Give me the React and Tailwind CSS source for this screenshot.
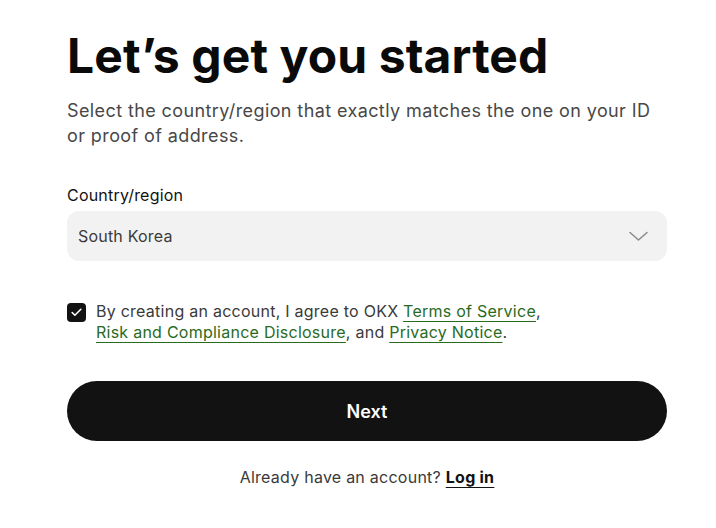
import React, { useState } from 'react';
import { Check } from 'lucide-react';

export default function App() {
  const [agreed, setAgreed] = useState(true);

  return (
    <div className="min-h-screen bg-white font-['Inter',sans-serif] text-[#0a0a0a]">
      <div className="w-[600px] ml-[67px] pt-[28px]">
        <h1 className="text-[48px] leading-[56px] font-bold tracking-[0.1px]">Let’s get you started</h1>
        <p className="mt-[14px] text-[18px] leading-[25px] tracking-[0.4px] text-[#484848]">
          Select the country/region that exactly matches the one on your ID or proof of address.
        </p>

        <div className="mt-[36px]">
          <label className="block text-[16px] leading-[22px] tracking-[0.2px] text-[#121212]">Country/region</label>
          <button className="mt-[5px] w-full h-[50px] rounded-[12px] bg-[#f2f2f2] flex items-center justify-between pl-[11px] pr-[19px]">
            <span className="text-[16px] tracking-[0.2px] text-[#3a3a3a]">South Korea</span>
            <svg width="19" height="10" viewBox="0 0 19 10" fill="none">
              <path d="M1 1.5l8.5 7.5 8.5-7.5" stroke="#8a8a8a" strokeWidth="1.5" strokeLinecap="round" strokeLinejoin="round" />
            </svg>
          </button>
        </div>

        <div className="mt-[40px] flex gap-[10px]">
          <button
            onClick={() => setAgreed(!agreed)}
            className="mt-[2px] w-[19px] h-[19px] shrink-0 rounded-[4px] bg-[#121212] flex items-center justify-center"
          >
            {agreed && <Check size={13} strokeWidth={3} className="text-white" />}
          </button>
          <p className="text-[16px] leading-[21px] tracking-[0.25px] text-[#3a3a3a]">
            By creating an account, I agree to OKX{' '}
            <a className="text-[#286b1e] underline decoration-[#286b1e] underline-offset-[4px]">Terms of Service</a>,{' '}
            <br />
            <a className="text-[#286b1e] underline decoration-[#286b1e] underline-offset-[4px]">Risk and Compliance Disclosure</a>, and{' '}
            <a className="text-[#286b1e] underline decoration-[#286b1e] underline-offset-[4px]">Privacy Notice</a>.
          </p>
        </div>

        <button className="mt-[38px] w-full h-[60px] rounded-full bg-[#121212] text-white text-[18px] font-semibold">
          Next
        </button>

        <p className="mt-[24px] text-center text-[16px] tracking-[0.25px] text-[#3a3a3a]">
          Already have an account?{' '}
          <a className="font-bold text-[#121212] underline underline-offset-[4px]">Log in</a>
        </p>
      </div>
    </div>
  );
}
